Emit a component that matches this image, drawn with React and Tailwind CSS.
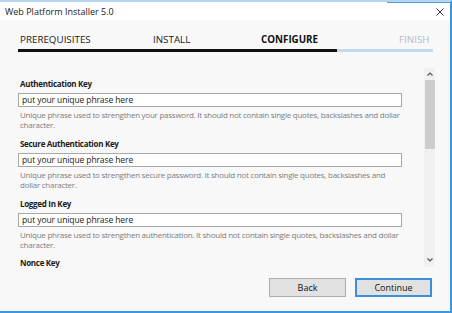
import React from 'react';

const fields = [
    {
        label: 'Authentication Key',
        lines: [
            'Unique phrase used to strengthen your password. It should not contain single quotes, backslashes and dollar',
            'character.',
        ],
    },
    {
        label: 'Secure Authentication Key',
        lines: [
            'Unique phrase used to strengthen secure password. It should not contain single quotes, backslashes and',
            'dollar character.',
        ],
    },
    {
        label: 'Logged In Key',
        lines: [
            'Unique phrase used to strengthen authentication. It should not contain single quotes, backslashes and dollar',
            'character.',
        ],
    },
];

const Label = ({ children }) => (
    <div className="h-[12px] leading-[12px] text-[8px] tracking-[-0.3px] font-bold text-[#1b1b1b] pl-[2px]">{children}</div>
);

const Field = ({ label, lines }) => (
    <div className="flex flex-col mb-[8px]">
        <Label>{label}</Label>
        <div className="mt-[3px] h-[14px] w-[384px] bg-white border border-[#a9a9a9] flex items-center pl-[3px] text-[8.5px] tracking-[-0.1px] text-[#222]">
            put your unique phrase here
        </div>
        <div className="mt-[3px] pl-[2px] text-[8px] tracking-[-0.25px] leading-[10px] text-[#7e7e7e]">
            {lines.map((line) => (
                <div key={line} className="whitespace-nowrap">{line}</div>
            ))}
        </div>
    </div>
);

const App = () => {
    return (
        <div
            className="relative w-[452px] h-[313px] overflow-hidden bg-[#f8f8f8] border-t-2 border-t-[#b3d5f1] border-r-2 border-r-[#3d97de] border-b-2 border-b-[#3d97de] flex flex-col"
            style={{ fontFamily: '"Open Sans", "Noto Sans", sans-serif' }}
        >
            <div className="absolute top-0 right-0 w-[63px] h-[1px] bg-[#5b9bd5]" />

            {/* title bar */}
            <div className="h-[18px] bg-white flex items-center justify-between pl-[5px] pr-[6px] shrink-0">
                <span className="text-[9px] text-[#1a1a1a] pt-[2px]">Web Platform Installer 5.0</span>
                <svg width="8" height="8" viewBox="0 0 8 8" className="mt-[2px]">
                    <path d="M0.5 0.5 L7.5 7.5 M7.5 0.5 L0.5 7.5" stroke="#333" strokeWidth="1" />
                </svg>
            </div>

            {/* wizard steps */}
            <div className="pl-[18px] pt-[13px] shrink-0">
                <div className="flex text-[9.8px] leading-[14px]">
                    <div className="w-[135px] pl-[2px] text-[#222]">PREREQUISITES</div>
                    <div className="w-[108px] text-[#222]">INSTALL</div>
                    <div className="w-[138px] font-bold text-[#111]">CONFIGURE</div>
                    <div className="text-[#b3bcc5]">FINISH</div>
                </div>
                <div className="flex mt-[2px] h-[3px] w-[415px]">
                    <div className="w-[319px] bg-[#111]" />
                    <div className="flex-1 bg-[#c3d9ed]" />
                </div>
            </div>

            {/* fields + scrollbar */}
            <div className="flex mt-[16px] h-[199px] pl-[18px] shrink-0">
                <div className="flex-1 pt-[10px]">
                    {fields.map((f) => (
                        <Field key={f.label} label={f.label} lines={f.lines} />
                    ))}
                    <div className="-mt-[1px]">
                        <Label>Nonce Key</Label>
                    </div>
                </div>
                <div className="w-[11px] mr-[15px] bg-[#f0f0f0] flex flex-col items-center">
                    <div className="h-[12px] flex items-center justify-center">
                        <svg width="6" height="4" viewBox="0 0 6 4">
                            <path d="M0.5 3.5 L3 1 L5.5 3.5" stroke="#555" strokeWidth="1.2" fill="none" />
                        </svg>
                    </div>
                    <div className="w-[10px] h-[69px] bg-[#cdcdcd]" />
                    <div className="flex-1" />
                    <div className="h-[14px] flex items-center justify-center">
                        <svg width="6" height="4" viewBox="0 0 6 4">
                            <path d="M0.5 0.5 L3 3 L5.5 0.5" stroke="#555" strokeWidth="1.2" fill="none" />
                        </svg>
                    </div>
                </div>
            </div>

            {/* buttons */}
            <div className="flex justify-end gap-[9px] pr-[18px] mt-[11px]">
                <button className="w-[77px] h-[19px] leading-none bg-[#e1e1e1] border border-[#adadad] text-[9px] text-[#111]">
                    Back
                </button>
                <button className="w-[77px] h-[19px] leading-none bg-[#e1e1e1] border-2 border-[#3b8fd8] text-[9px] text-[#111]">
                    Continue
                </button>
            </div>
        </div>
    );
};

export default App;
